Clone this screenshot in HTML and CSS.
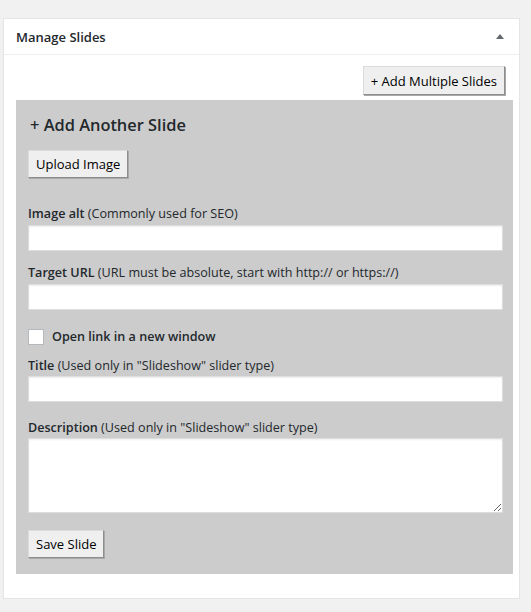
FILE: index.html
```html
<!DOCTYPE html>
<html lang="en">
<head>
  <meta charset="UTF-8">
  <title>Manage Slides</title>
  <link rel="stylesheet" href="styles.css">
</head>
<body>
  <div class="postbox">
    <div class="postbox-header">
      <h2>Manage Slides</h2>
      <span class="toggle"></span>
    </div>
    <div class="inside">
      <div class="top-actions">
        <button class="btn">+ Add Multiple Slides</button>
      </div>
      <div class="slide-panel">
        <h3>+ Add Another Slide</h3>
        <button class="btn">Upload Image</button>

        <div class="field first">
          <label><strong>Image alt</strong> (Commonly used for SEO)</label>
          <input type="text">
        </div>
        <div class="field">
          <label><strong>Target URL</strong> (URL must be absolute, start with http:// or https://)</label>
          <input type="text">
        </div>
        <label class="check"><input type="checkbox"> Open link in a new window</label>
        <div class="field title">
          <label><strong>Title</strong> (Used only in "Slideshow" slider type)</label>
          <input type="text">
        </div>
        <div class="field desc">
          <label><strong>Description</strong> (Used only in "Slideshow" slider type)</label>
          <textarea></textarea>
        </div>
        <button class="btn save">Save Slide</button>
      </div>
    </div>
  </div>
</body>
</html>
```
FILE: styles.css
```css
* {
  margin: 0;
  padding: 0;
  box-sizing: border-box;
}

body {
  background: #f1f1f1;
  font-family: 'Open Sans', sans-serif;
  font-size: 12.6px;
  color: #23282d;
  padding: 18px 11px 0 3px;
}

.postbox {
  background: #fff;
  border: 1px solid #e5e5e5;
  box-shadow: 0 1px 1px rgba(0, 0, 0, 0.04);
}

.postbox-header {
  display: flex;
  justify-content: space-between;
  align-items: center;
  height: 36px;
  padding: 0 15px 0 12px;
  border-bottom: 1px solid #eee;
}

.postbox-header h2 {
  font-size: 13px;
  font-weight: 600;
  color: #23282d;
}

.toggle {
  width: 0;
  height: 0;
  border-left: 4px solid transparent;
  border-right: 4px solid transparent;
  border-bottom: 5px solid #646970;
}

.inside {
  padding: 11px 6px 24px 12px;
}

.top-actions {
  display: flex;
  justify-content: flex-end;
  padding-right: 8px;
  margin-bottom: 5px;
}

.btn {
  font-family: 'Open Sans', sans-serif;
  font-size: 13px;
  color: #000;
  background: #efefef;
  border: 1px solid;
  border-color: #dcdcdc #8d8d8d #8d8d8d #dcdcdc;
  box-shadow: 1px 1px 0 #a9a9a9;
  padding: 0 7px;
  height: 28px;
  line-height: 26px;
}

.top-actions .btn {
  height: 29px;
}

.slide-panel {
  background: #ccc;
  padding: 14px 10px 16px 12px;
}

.slide-panel h3 {
  font-size: 16.4px;
  font-weight: 600;
  color: #23282d;
  margin: 0 0 14px 2px;
  line-height: 22px;
}

.field {
  margin-top: 13px;
}

.field.first {
  margin-top: 27px;
}

.field.title {
  margin-top: 11px;
}

.field.desc {
  margin-top: 17px;
}

.field label {
  display: block;
  margin-bottom: 2px;
  line-height: 18px;
}

.field.title label,
.field.desc label {
  margin-bottom: 1px;
}

.field strong {
  font-weight: 600;
}

input[type="text"],
textarea {
  display: block;
  width: 100%;
  height: 26px;
  background: #fff;
  border: 1px solid #ddd;
  box-shadow: inset 0 1px 2px rgba(0, 0, 0, 0.07);
}

textarea {
  height: 75px;
  resize: vertical;
}

.check {
  display: flex;
  align-items: center;
  margin-top: 18px;
  font-weight: 600;
  line-height: 18px;
}

.check input {
  width: 16px;
  height: 16px;
  margin-right: 8px;
  -webkit-appearance: none;
  appearance: none;
  background: #fff;
  border: 1px solid #b4b9be;
}

.save {
  margin-top: 17px;
}
```
